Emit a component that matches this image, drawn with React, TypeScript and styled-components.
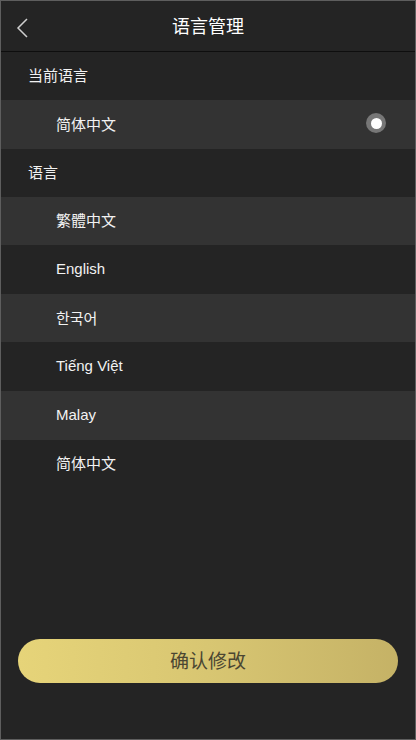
import React from "react";
import styled, { createGlobalStyle } from "styled-components";

const Global = createGlobalStyle`
  html, body { margin: 0; padding: 0; background: #242424; }
  body { font-family: "Liberation Sans", Arial, "Noto Sans CJK SC", sans-serif; }
  * { box-sizing: border-box; }
`;

const Page = styled.div`
  width: 416px;
  height: 740px;
  border: 1px solid #5e5e5e;
  background: #242424;
  display: flex;
  flex-direction: column;
  color: #f2f2f2;
`;

const Header = styled.header`
  height: 51px;
  flex-shrink: 0;
  display: flex;
  align-items: center;
  justify-content: center;
  position: relative;
  border-bottom: 1px solid #0e0e0e;
  padding-bottom: 3px;
  font-size: 18px;
  color: #ffffff;
`;

const Back = styled.div`
  position: absolute;
  left: 14px;
  top: 16px;
  width: 16px;
  height: 22px;
  display: flex;
  align-items: center;
`;

const SectionLabel = styled.div`
  height: 48px;
  display: flex;
  align-items: center;
  padding-left: 27px;
  padding-bottom: 3px;
  font-size: 15px;
`;

const Row = styled.div<{ $alt?: boolean }>`
  height: 48.6px;
  display: flex;
  align-items: center;
  justify-content: space-between;
  padding-left: 55px;
  padding-right: 29px;
  padding-bottom: 2px;
  font-size: 15px;
  background: ${(p) => (p.$alt ? "#333333" : "#242424")};
`;

const Radio = styled.span`
  width: 20px;
  height: 20px;
  border-radius: 50%;
  background: #777;
  display: flex;
  align-items: center;
  justify-content: center;
  &::after {
    content: "";
    width: 11px;
    height: 11px;
    border-radius: 50%;
    background: #fff;
  }
`;

const Spacer = styled.div`
  flex: 1;
`;

const Footer = styled.div`
  padding: 0 17px 56px 17px;
`;

const Confirm = styled.button`
  width: 100%;
  height: 44px;
  border: none;
  border-radius: 22px;
  padding: 0 0 3px 0;
  background: linear-gradient(90deg, #e6d479 0%, #d8c672 50%, #c5b266 100%);
  color: #4a4632;
  font-size: 19px;
  font-family: "Noto Sans CJK SC", sans-serif;
  cursor: pointer;
`;

const langs = ["繁體中文", "English", "한국어", "Tiếng Việt", "Malay", "简体中文"];

export default function App() {
  return (
    <>
      <Global />
      <Page>
        <Header>
          <Back>
            <svg width="14" height="22" viewBox="0 0 14 22">
              <path d="M12 2 L3 11 L12 20" fill="none" stroke="#cfcfcf" strokeWidth="1.5" />
            </svg>
          </Back>
          语言管理
        </Header>
        <SectionLabel>当前语言</SectionLabel>
        <Row $alt>
          简体中文
          <Radio />
        </Row>
        <SectionLabel>语言</SectionLabel>
        {langs.map((l, i) => (
          <Row key={i} $alt={i % 2 === 0}>
            {l}
          </Row>
        ))}
        <Spacer />
        <Footer>
          <Confirm>确认修改</Confirm>
        </Footer>
      </Page>
    </>
  );
}
